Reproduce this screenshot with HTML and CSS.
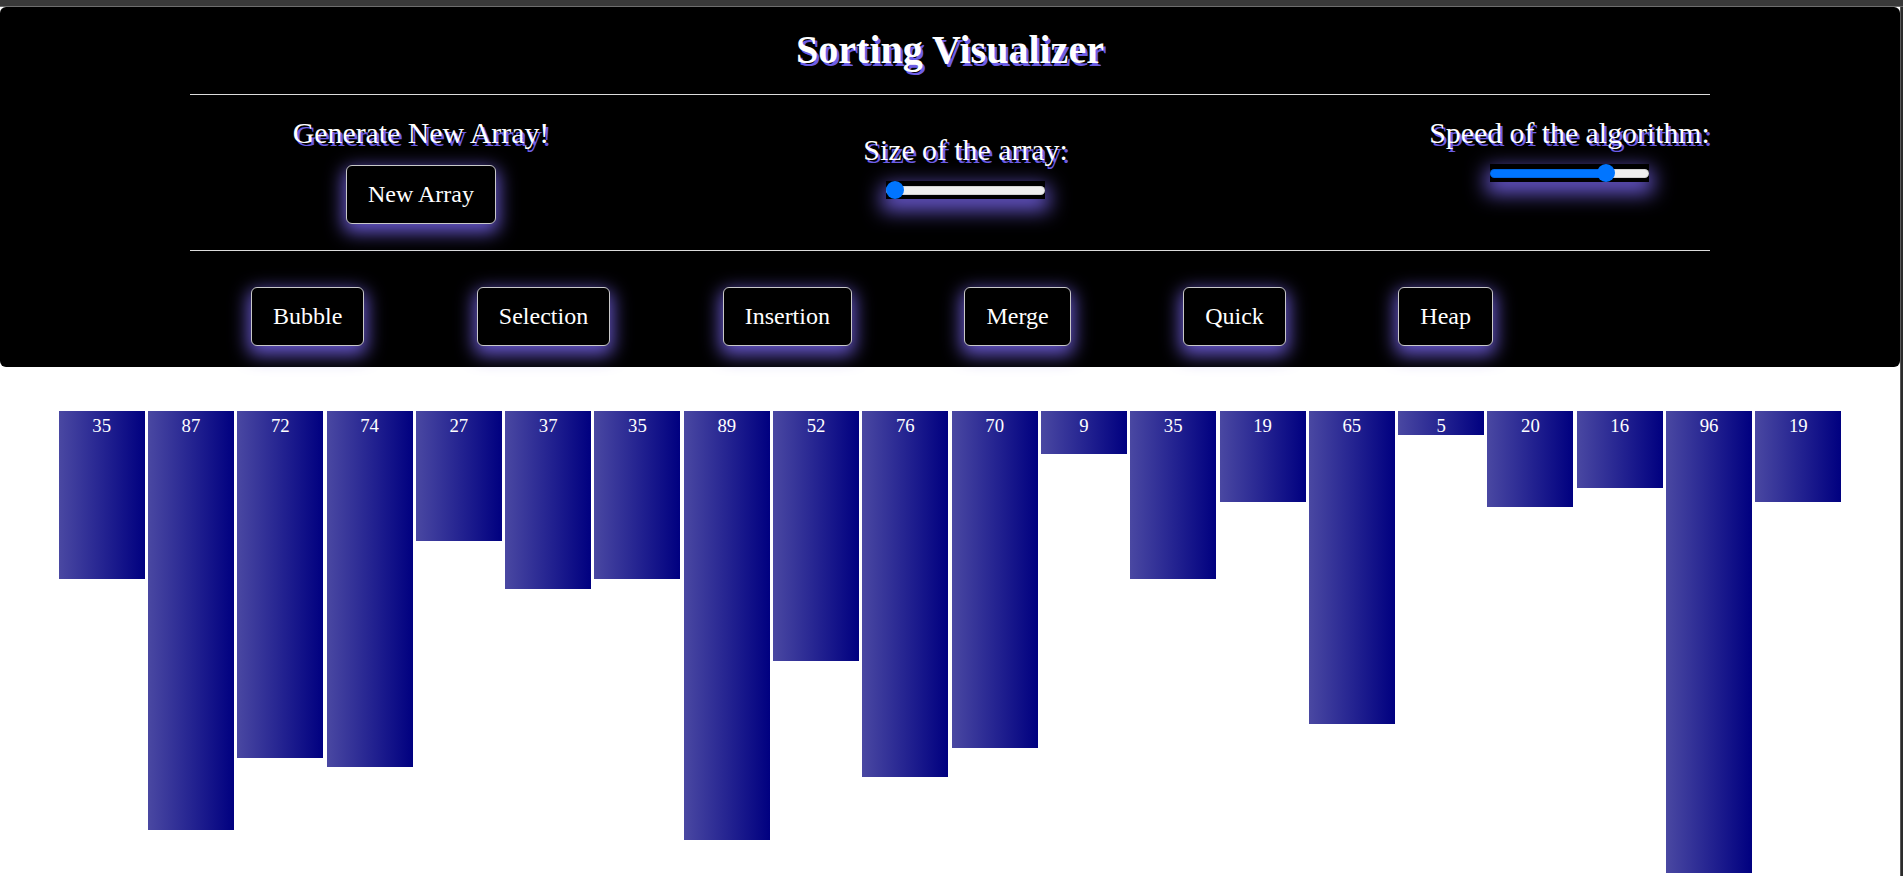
FILE: index.html
```html
<!DOCTYPE html>
<html lang="en">
<head>
<meta charset="utf-8">
<title>Sorting Visualizer</title>
<link rel="stylesheet" href="styles.css">
</head>
<body>
<div class="topbar"></div>
<div class="window">
  <div class="page">
    <header class="panel">
      <h1 class="title">Sorting Visualizer</h1>
      <hr class="rule">
      <div class="controls">
        <div class="control control-new">
          <h2 class="label">Generate New Array!</h2>
          <button class="btn btn-gap">New Array</button>
        </div>
        <div class="control control-size">
          <h2 class="label">Size of the array:</h2>
          <input class="range" type="range" min="5" max="100" value="5" style="--fill:0%">
        </div>
        <div class="control control-speed">
          <h2 class="label">Speed of the algorithm:</h2>
          <input class="range" type="range" min="0" max="100" value="76" style="--fill:76%">
        </div>
      </div>
      <hr class="rule rule-lower">
      <div class="algos">
        <button class="btn">Bubble</button>
        <button class="btn">Selection</button>
        <button class="btn">Insertion</button>
        <button class="btn">Merge</button>
        <button class="btn">Quick</button>
        <button class="btn">Heap</button>
      </div>
    </header>
    <div class="bars">
      <div class="bar" style="height:168.7px"><span class="bar-value">35</span></div>
      <div class="bar" style="height:419.3px"><span class="bar-value">87</span></div>
      <div class="bar" style="height:347.0px"><span class="bar-value">72</span></div>
      <div class="bar" style="height:356.7px"><span class="bar-value">74</span></div>
      <div class="bar" style="height:130.1px"><span class="bar-value">27</span></div>
      <div class="bar" style="height:178.3px"><span class="bar-value">37</span></div>
      <div class="bar" style="height:168.7px"><span class="bar-value">35</span></div>
      <div class="bar" style="height:429.0px"><span class="bar-value">89</span></div>
      <div class="bar" style="height:250.6px"><span class="bar-value">52</span></div>
      <div class="bar" style="height:366.3px"><span class="bar-value">76</span></div>
      <div class="bar" style="height:337.4px"><span class="bar-value">70</span></div>
      <div class="bar" style="height:43.4px"><span class="bar-value">9</span></div>
      <div class="bar" style="height:168.7px"><span class="bar-value">35</span></div>
      <div class="bar" style="height:91.6px"><span class="bar-value">19</span></div>
      <div class="bar" style="height:313.3px"><span class="bar-value">65</span></div>
      <div class="bar" style="height:24.1px"><span class="bar-value">5</span></div>
      <div class="bar" style="height:96.4px"><span class="bar-value">20</span></div>
      <div class="bar" style="height:77.1px"><span class="bar-value">16</span></div>
      <div class="bar" style="height:462.7px"><span class="bar-value">96</span></div>
      <div class="bar" style="height:91.6px"><span class="bar-value">19</span></div>
    </div>
  </div>
  <div class="edge"></div>
</div>
</body>
</html>
```

FILE: styles.css
```css
html, body {
  margin: 0;
  padding: 0;
  height: 100%;
  overflow: hidden;
}

body {
  background: #ffffff;
  font-family: "Liberation Serif", "Times New Roman", serif;
}

.topbar {
  height: 6px;
  background: #393939;
  border-bottom: 1px solid #6e6e6e;
}

.window {
  display: flex;
  height: 869px;
}

.page {
  flex: 1;
  min-width: 0;
  background: #ffffff;
}

.edge {
  width: 2px;
  background: #2b2b2b;
  border-left: 1px solid #5a5a5a;
}

.panel {
  background: #000000;
  border-radius: 6px;
  padding: 20px 0 21px;
}

.title {
  margin: 0;
  text-align: center;
  color: #ffffff;
  font-size: 40px;
  line-height: 46px;
  font-weight: bold;
  text-shadow: 2.5px 2.5px 0 #6d5ee6;
}

.rule {
  width: 80%;
  height: 0;
  margin: 21px auto 0;
  border: 0;
  border-top: 1px solid #dcdcdc;
}

.rule-lower {
  margin-top: 26px;
}

.controls {
  display: flex;
  align-items: flex-start;
  margin-top: 21px;
}

.control {
  width: 300px;
  flex: none;
  display: flex;
  flex-direction: column;
  align-items: center;
}

.control-new {
  margin-left: 271px;
}

.control-size {
  margin-left: 244.5px;
  padding-top: 17px;
}

.control-speed {
  margin-left: 304px;
}

.label {
  margin: 0;
  color: #ffffff;
  font-size: 29.8px;
  line-height: 34px;
  font-weight: normal;
  white-space: nowrap;
  text-shadow: 2.5px 2.5px 0 #6d5ee6;
}

.btn {
  font-family: "Liberation Serif", "Times New Roman", serif;
  font-size: 24px;
  line-height: 27px;
  color: #ffffff;
  background: #000000;
  border: 1px solid #c8c8c8;
  border-radius: 6px;
  padding: 15px 21px;
  margin: 0;
  box-shadow: 0 6px 18px 3px rgba(112, 94, 222, 0.9);
  cursor: pointer;
}

.btn-gap {
  margin-top: 15px;
}

.range {
  -webkit-appearance: none;
  appearance: none;
  width: 159px;
  height: 18px;
  margin: 14px 0 0;
  padding: 0;
  background: transparent;
  box-shadow: 0 8px 20px 4px rgba(112, 94, 222, 0.9);
}

.range::-webkit-slider-runnable-track {
  height: 9px;
  border-radius: 5px;
  background: linear-gradient(to right, #0075ff 0, #0075ff var(--fill), #efefef var(--fill), #efefef 100%);
  box-shadow: inset 0 0 0 1px rgba(0, 0, 0, 0.12);
}

.range::-webkit-slider-thumb {
  -webkit-appearance: none;
  appearance: none;
  width: 18px;
  height: 18px;
  margin-top: -4.5px;
  border: 0;
  border-radius: 50%;
  background: #0075ff;
}

.algos {
  display: flex;
  gap: 112.5px;
  margin-top: 36px;
  padding-left: 251px;
}

.bars {
  display: flex;
  justify-content: center;
  align-items: flex-start;
  gap: 3.3px;
  margin-top: 43.5px;
}

.bar {
  flex: none;
  width: 86px;
  box-sizing: border-box;
  padding-top: 4.6px;
  background: linear-gradient(to right, #4a48a2, #000080);
  color: #ffffff;
  text-align: center;
  font-size: 18.75px;
  line-height: 21.5px;
}

.bar-value {
  display: block;
}
```
